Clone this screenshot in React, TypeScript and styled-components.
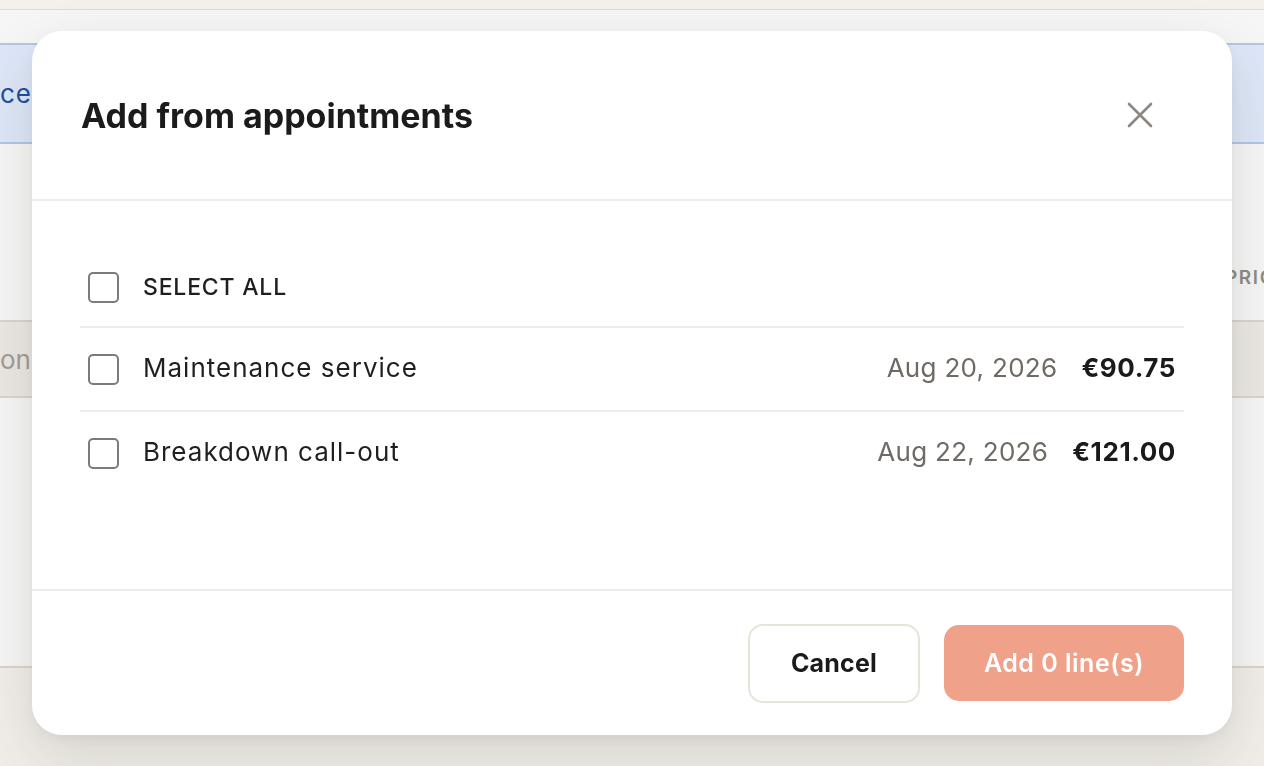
import React, { useState } from "react";
import styled, { createGlobalStyle } from "styled-components";

const GlobalStyle = createGlobalStyle`
  html, body {
    margin: 0;
    padding: 0;
    height: 100%;
    overflow: hidden;
    background: #f1eee9;
    font-family: Inter, "Liberation Sans", sans-serif;
  }
  * {
    box-sizing: border-box;
  }
`;

const Page = styled.div`
  width: 1264px;
  height: 766px;
  background: #f1eee9;
`;

const TopBar = styled.div`
  height: 10px;
  background: #f4f1ec;
  border-bottom: 1px solid #e1dad0;
`;

const Panel = styled.div`
  height: 658px;
  padding-top: 33px;
  background: #f6f6f6;
  border-bottom: 2px solid #dbd4cb;
`;

const Banner = styled.div`
  height: 101px;
  display: flex;
  align-items: center;
  background: #dde7f7;
  border-top: 2px solid #b3c6e7;
  border-bottom: 2px solid #b3c6e7;
  color: #1d4f9e;
  font-size: 26px;
  letter-spacing: 1px;
`;

const TableHead = styled.div`
  height: 176px;
  display: flex;
  align-items: center;
  justify-content: flex-end;
  padding-top: 90px;
`;

const HeadLabel = styled.span`
  width: 39px;
  overflow: hidden;
  white-space: nowrap;
  font-size: 19px;
  font-weight: 600;
  letter-spacing: 1.6px;
  color: #8e8a85;
`;

const TableRow = styled.div`
  height: 78px;
  display: flex;
  align-items: center;
  background: #ebe8e3;
  border-top: 2px solid #dbd4cb;
  border-bottom: 2px solid #dbd4cb;
  color: #a29c94;
  font-size: 26px;
`;

const Dialog = styled.div`
  position: fixed;
  left: 32px;
  top: 31px;
  width: 1200px;
  height: 704px;
  display: flex;
  flex-direction: column;
  background: #ffffff;
  border-radius: 30px;
  box-shadow: 0 24px 60px rgba(60, 50, 40, 0.14), 0 4px 16px rgba(0, 0, 0, 0.05);
`;

const Header = styled.div`
  height: 170px;
  display: flex;
  align-items: center;
  justify-content: space-between;
  padding: 0 79px 0 49px;
  border-bottom: 2px solid #efebe6;
`;

const Title = styled.h2`
  margin: 0;
  font-size: 34px;
  font-weight: 700;
  letter-spacing: 0;
  color: #1b1b1b;
`;

const CloseButton = styled.button`
  width: 26px;
  height: 26px;
  padding: 0;
  border: none;
  background: none;
  cursor: pointer;
  display: flex;
  align-items: center;
  justify-content: center;
`;

const Body = styled.div`
  flex: 1;
  padding: 43px 48px 0;
`;

const Row = styled.label<{ $head?: boolean }>`
  height: ${(p) => (p.$head ? 82 : 84)}px;
  display: flex;
  align-items: center;
  gap: 24px;
  padding: ${(p) => (p.$head ? "4px" : "0")} 9px 0 8px;
  cursor: pointer;
  & + & {
    border-top: 2px solid #efebe6;
  }
`;

const Box = styled.span<{ $checked: boolean }>`
  width: 31px;
  height: 31px;
  flex-shrink: 0;
  border: 2px solid #7b7b7b;
  border-radius: 5px;
  background: ${(p) => (p.$checked ? "#f0a189" : "#fff")};
`;

const SelectAllText = styled.span`
  font-size: 23px;
  font-weight: 500;
  letter-spacing: 0.8px;
  color: #1f1f1f;
`;

const Name = styled.span`
  flex: 1;
  margin-top: -4px;
  font-size: 26px;
  letter-spacing: 1px;
  color: #1f1f1f;
`;

const DateText = styled.span`
  margin-top: -4px;
  font-size: 26px;
  letter-spacing: 0.3px;
  color: #6f6a64;
`;

const Price = styled.span`
  margin-top: -4px;
  margin-right: -1px;
  font-size: 26px;
  font-weight: 700;
  letter-spacing: 0.6px;
  color: #1a1a1a;
`;

const Footer = styled.div`
  height: 146px;
  display: flex;
  align-items: center;
  justify-content: flex-end;
  gap: 24px;
  padding: 0 48px;
  border-top: 2px solid #efebe6;
`;

const Button = styled.button<{ $primary?: boolean }>`
  height: ${(p) => (p.$primary ? 76 : 79)}px;
  padding: 0;
  width: ${(p) => (p.$primary ? 240 : 172)}px;
  border-radius: 15px;
  border: ${(p) => (p.$primary ? "none" : "2px solid #e9e4da")};
  background: ${(p) => (p.$primary ? "#f0a189" : "#fff")};
  color: ${(p) => (p.$primary ? "#fff" : "#1b1b1b")};
  font-family: Inter, "Liberation Sans", sans-serif;
  font-size: 25px;
  font-weight: ${(p) => (p.$primary ? 600 : 700)};
  letter-spacing: ${(p) => (p.$primary ? 0.5 : 0.2)}px;
  cursor: pointer;
`;

const appointments = [
  { id: 1, name: "Maintenance service", date: "Aug 20, 2026", price: "€90.75" },
  { id: 2, name: "Breakdown call-out", date: "Aug 22, 2026", price: "€121.00" },
];

export default function App() {
  const [selected, setSelected] = useState<number[]>([]);

  const toggle = (id: number) =>
    setSelected((prev) =>
      prev.includes(id) ? prev.filter((x) => x !== id) : [...prev, id]
    );

  const allChecked = selected.length === appointments.length;

  return (
    <>
      <GlobalStyle />
      <Page>
        <TopBar />
        <Panel>
          <Banner>ce</Banner>
          <TableHead>
            <HeadLabel>PRICE</HeadLabel>
          </TableHead>
          <TableRow>on</TableRow>
        </Panel>
      </Page>
      <Dialog>
        <Header>
          <Title>Add from appointments</Title>
          <CloseButton aria-label="Close">
            <svg width="26" height="26" viewBox="0 0 26 26">
              <path
                d="M2 2 L24 24 M24 2 L2 24"
                stroke="#8c8782"
                strokeWidth="2.6"
                strokeLinecap="round"
              />
            </svg>
          </CloseButton>
        </Header>
        <Body>
          <Row
            $head
            onClick={() =>
              setSelected(allChecked ? [] : appointments.map((a) => a.id))
            }
          >
            <Box $checked={allChecked} />
            <SelectAllText>SELECT ALL</SelectAllText>
          </Row>
          {appointments.map((a) => (
            <Row key={a.id} onClick={() => toggle(a.id)}>
              <Box $checked={selected.includes(a.id)} />
              <Name>{a.name}</Name>
              <DateText>{a.date}</DateText>
              <Price>{a.price}</Price>
            </Row>
          ))}
        </Body>
        <Footer>
          <Button>Cancel</Button>
          <Button $primary>Add {selected.length} line(s)</Button>
        </Footer>
      </Dialog>
    </>
  );
}
